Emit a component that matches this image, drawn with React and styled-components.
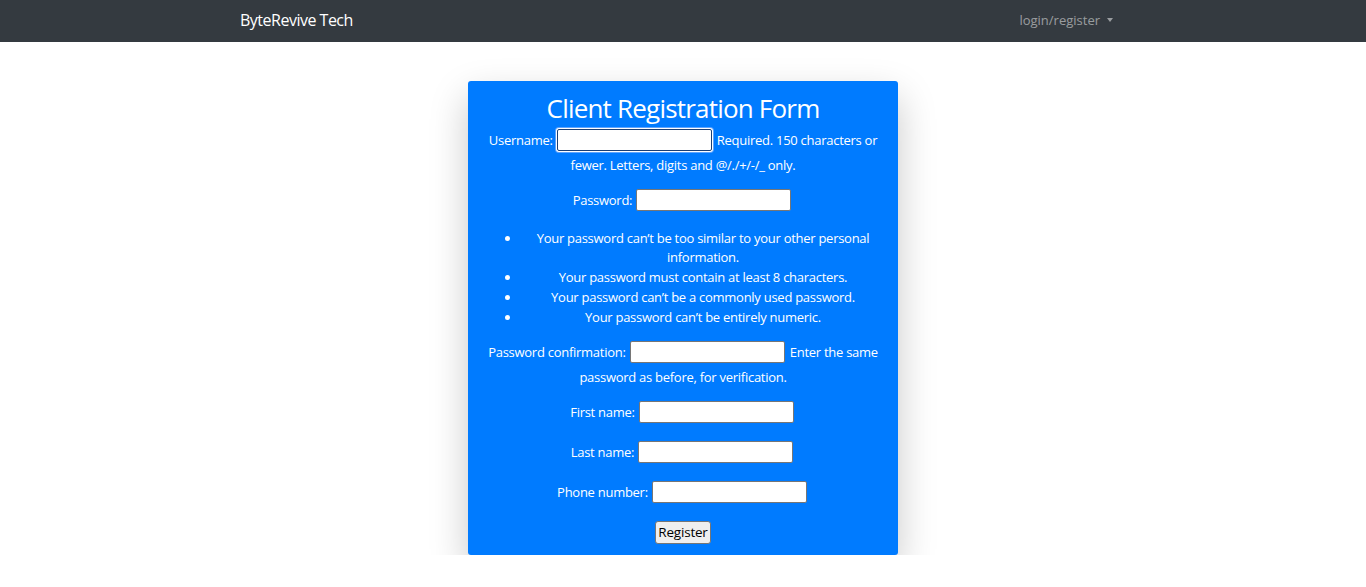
import React from 'react';
import styled, { createGlobalStyle } from 'styled-components';

const GlobalStyle = createGlobalStyle`
  body {
    margin: 0;
    background: #ffffff;
    font-family: "Open Sans", "Noto Sans", sans-serif;
  }
`;

const App = () => {
  return (
    <>
      <GlobalStyle />
      <NavBar>
        <NavInner>
          <Brand>ByteRevive Tech</Brand>
          <NavDropdown>
            login/register
            <Caret />
          </NavDropdown>
        </NavInner>
      </NavBar>
      <Main>
        <FormCard>
          <FormTitle>Client Registration Form</FormTitle>
          <FieldRow>
            <label>Username:</label> <TextInput focused type="text" />{' '}
            <HelpText>Required. 150 characters or fewer. Letters, digits and @/./+/-/_ only.</HelpText>
          </FieldRow>
          <FieldRow>
            <label>Password:</label> <TextInput type="password" />
          </FieldRow>
          <HelpList>
            <li>Your password can’t be too similar to your other personal information.</li>
            <li>Your password must contain at least 8 characters.</li>
            <li>Your password can’t be a commonly used password.</li>
            <li>Your password can’t be entirely numeric.</li>
          </HelpList>
          <FieldRow>
            <label>Password confirmation:</label> <TextInput type="password" />{' '}
            <HelpText>Enter the same password as before, for verification.</HelpText>
          </FieldRow>
          <FieldRow>
            <label>First name:</label> <TextInput type="text" />
          </FieldRow>
          <FieldRow>
            <label>Last name:</label> <TextInput type="text" />
          </FieldRow>
          <FieldRow>
            <label>Phone number:</label> <TextInput type="text" />
          </FieldRow>
          <SubmitButton type="submit">Register</SubmitButton>
        </FormCard>
      </Main>
    </>
  );
};

const NavBar = styled.nav`
  height: 42px;
  background-color: #343a40;
`;

const NavInner = styled.div`
  width: 886px;
  height: 100%;
  margin: 0 auto;
  display: flex;
  align-items: center;
  justify-content: space-between;
`;

const Brand = styled.a`
  color: #ffffff;
  font-size: 16px;
  letter-spacing: -0.5px;
  margin-top: -2px;
`;

const NavDropdown = styled.a`
  color: rgba(255, 255, 255, 0.5);
  font-size: 13px;
  display: flex;
  align-items: center;
  margin-right: 13px;
  margin-top: -2px;
`;

const Caret = styled.span`
  margin-left: 7px;
  width: 0;
  height: 0;
  border-top: 4px solid rgba(255, 255, 255, 0.5);
  border-left: 3.5px solid transparent;
  border-right: 3.5px solid transparent;
`;

const Main = styled.main`
  display: flex;
  justify-content: center;
  padding-top: 39px;
`;

const FormCard = styled.form`
  width: 430px;
  box-sizing: border-box;
  padding: 12px 20px 11px;
  background-color: #007bff;
  border-radius: 3px;
  box-shadow: 0 16px 38px rgba(0, 0, 0, 0.22);
  color: #ffffff;
  font-size: 13px;
  letter-spacing: -0.27px;
  line-height: 19.5px;
  text-align: center;
`;

const FormTitle = styled.h2`
  margin: 0 0 5px;
  font-size: 26px;
  font-weight: 400;
  line-height: 1.2;
  letter-spacing: -0.8px;
`;

const FieldRow = styled.p`
  margin: 0 0 13px;
`;

const HelpText = styled.span``;

const TextInput = styled.input`
  width: 155px;
  height: 22px;
  box-sizing: border-box;
  margin: 0 2px 5px 1px;
  padding: 1px 2px;
  border: 1px solid ${(p) => (p.focused ? '#1b3f75' : '#767676')};
  border-radius: 2px;
  background: #ffffff;
  font-size: 13px;
  outline: none;
  box-shadow: ${(p) => (p.focused ? '0 0 0 1px #ffffff, 0 0 0 2px #5ea4ff' : 'none')};
`;

const HelpList = styled.ul`
  margin: 0 0 14px;
  padding-left: 33px;
  line-height: 19.7px;

  li {
    padding-left: 7px;
  }
`;

const SubmitButton = styled.button`
  font-family: "Open Sans", sans-serif;
  font-size: 13.5px;
  letter-spacing: -0.2px;
  padding: 0 2px;
  height: 23px;
  background: #efefef;
  border: 1px solid #767676;
  border-radius: 3px;
  color: #000000;
`;

export default App;
